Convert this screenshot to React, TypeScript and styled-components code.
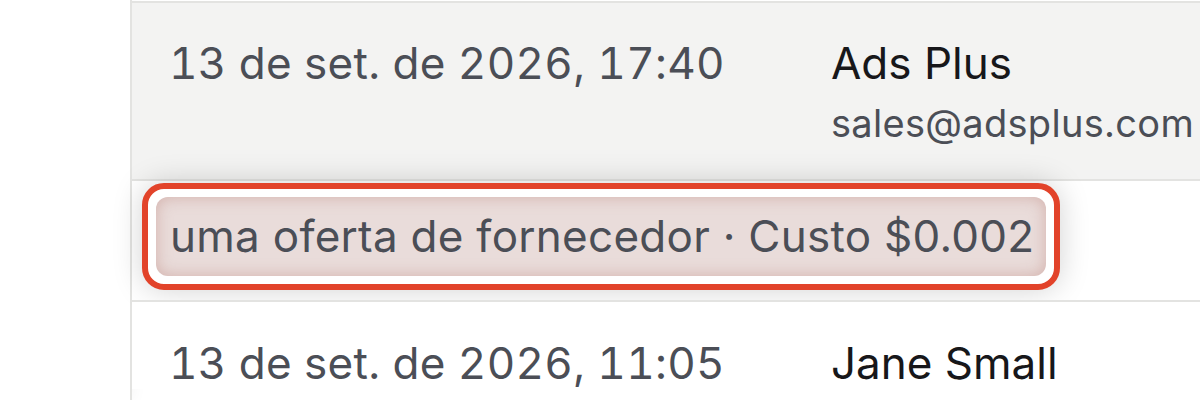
import styled, { createGlobalStyle } from 'styled-components';

const GlobalStyle = createGlobalStyle`
  html, body {
    margin: 0;
    padding: 0;
    background: #ffffff;
  }
  body {
    font-family: Inter, "Noto Sans", sans-serif;
    -webkit-font-smoothing: antialiased;
  }
`;

const Page = styled.div`
  display: flex;
  width: 1200px;
  height: 400px;
  overflow: hidden;
  background: #ffffff;
`;

const Sidebar = styled.div`
  width: 130px;
  flex-shrink: 0;
  background: #ffffff;
  box-shadow: 4px 0 14px rgba(0, 0, 0, 0.04);
`;

const Table = styled.div`
  flex: 1;
  display: flex;
  flex-direction: column;
  padding-top: 1px;
  border-left: 2px solid #e3e3e1;
`;

const Row = styled.div<{ $shade?: boolean }>`
  display: grid;
  grid-template-columns: 661px 1fr;
  flex-shrink: 0;
  border-top: 2px solid #e3e3e1;
  background: ${(p) => (p.$shade ? '#f3f3f2' : '#ffffff')};
  height: ${(p) => (p.$shade ? '178px' : 'auto')};
  padding: ${(p) => (p.$shade ? '34px' : '35px')} 0 0 37px;
  box-sizing: border-box;
`;

const NoteRow = styled.div`
  display: flex;
  align-items: flex-start;
  flex-shrink: 0;
  border-top: 2px solid #e3e3e1;
  height: 121px;
  padding: 2px 0 0 10px;
  box-sizing: border-box;
  background: #ffffff;
`;

const DateCell = styled.div`
  font-size: 44px;
  line-height: 52px;
  letter-spacing: 0.3px;
  color: #4b4e56;
  white-space: nowrap;
  font-variant-numeric: tabular-nums;
`;

const Contact = styled.div`
  display: flex;
  flex-direction: column;
  white-space: nowrap;
  margin-left: 1px;
`;

const Name = styled.div`
  font-size: 44px;
  line-height: 52px;
  color: #17171a;
`;

const Email = styled.div`
  font-size: 38px;
  line-height: 44px;
  letter-spacing: 0.3px;
  margin-top: 12px;
  color: #4b4e56;
`;

const Highlight = styled.div`
  display: inline-flex;
  border: 6px solid #e2432a;
  border-radius: 22px;
  padding: 8px;
  background: #ffffff;
  box-shadow: 0 0 30px rgba(0, 0, 0, 0.18);
`;

const Chip = styled.div`
  font-size: 44px;
  line-height: 79px;
  letter-spacing: 0.27px;
  padding: 0 12px 0 14px;
  border-radius: 12px;
  color: #4b4e56;
  white-space: nowrap;
  background: #e9dcda;
  box-shadow: inset 0 0 16px rgba(175, 105, 95, 0.38);
`;

const rows = [
  { date: '13 de set. de 2026, 17:40', name: 'Ads Plus', email: 'sales@adsplus.com' },
  { date: '13 de set. de 2026, 11:05', name: 'Jane Small', email: '' },
];

export default function App() {
  return (
    <Page>
      <GlobalStyle />
      <Sidebar />
      <Table>
        <Row $shade>
          <DateCell>{rows[0].date}</DateCell>
          <Contact>
            <Name>{rows[0].name}</Name>
            <Email>{rows[0].email}</Email>
          </Contact>
        </Row>
        <NoteRow>
          <Highlight>
            <Chip>uma oferta de fornecedor · Custo $0.002</Chip>
          </Highlight>
        </NoteRow>
        <Row>
          <DateCell>{rows[1].date}</DateCell>
          <Contact>
            <Name>{rows[1].name}</Name>
          </Contact>
        </Row>
      </Table>
    </Page>
  );
}
